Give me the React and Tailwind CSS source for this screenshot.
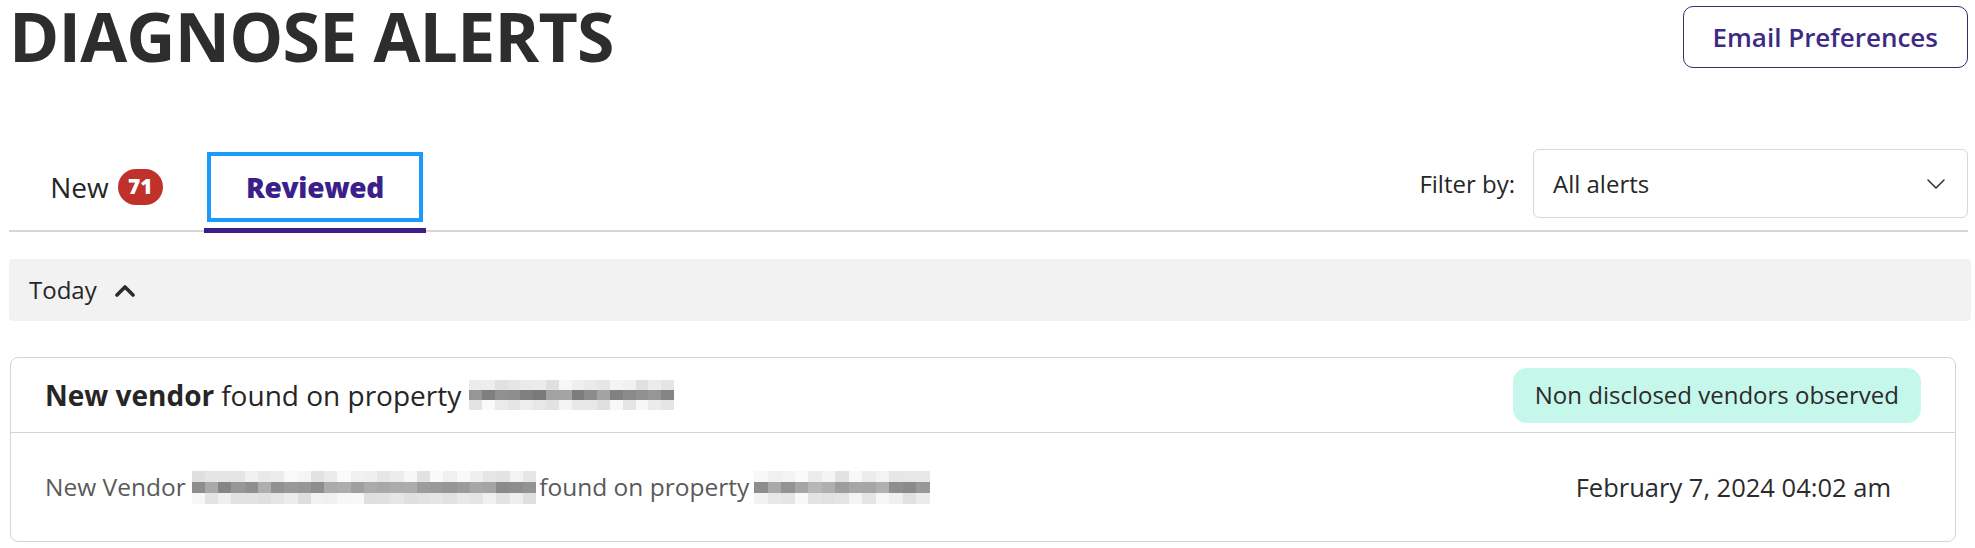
import React from "react";

// pixelated placeholder used where the screenshot hides property / vendor names
function Mosaic({ cols, rows, cell = 13, rowH = 10, seed = 1, dark = 1 }) {
  let s = seed;
  const rand = () => {
    s = (s * 9301 + 49297) % 233280;
    return s / 233280;
  };
  const cells = [];
  for (let r = 0; r < rows; r++) {
    for (let c = 0; c < cols; c++) {
      const mid = r === Math.floor(rows / 2);
      const base = mid ? 150 - 30 * dark : 222;
      const spread = mid ? 45 : 28;
      const v = Math.round(base + rand() * spread);
      cells.push(
        <div
          key={r + "-" + c}
          style={{ width: cell, height: rowH, backgroundColor: `rgb(${v},${v},${v})` }}
        />
      );
    }
  }
  return (
    <span className="inline-grid align-middle" style={{ gridTemplateColumns: `repeat(${cols}, ${cell}px)` }}>
      {cells}
    </span>
  );
}

export default function App() {
  return (
    <div className="min-h-screen bg-white font-['Open_Sans',sans-serif] text-[#2b2b2b]">
      {/* header */}
      <div className="ml-[9px] mr-[7px] flex items-start justify-between">
        <h1 className="text-[68px] font-bold leading-[72px] tracking-[-0.8px] text-[#2d2d2d]">DIAGNOSE ALERTS</h1>
        <button className="mt-[6px] flex h-[62px] items-center rounded-[10px] border-[1.5px] border-[#3b2a6e] px-[29px] text-[26px] font-semibold text-[#3d2a84]">
          Email Preferences
        </button>
      </div>

      {/* tabs + filter */}
      <div className="ml-[9px] mr-[7px] mt-[77px] flex items-start justify-between border-b-2 border-[#d6d6d6]">
        <div className="flex items-end">
          <div className="-mb-[3px] w-[195px] border-b-[5px] border-transparent pb-[6px] pt-[3px]">
            <div className="flex h-[70px] items-center justify-center border-4 border-transparent">
              <span className="text-[28px] text-[#262626]">New</span>
              <span className="ml-[9px] flex h-[36px] w-[45px] items-center justify-center rounded-full bg-[#c0312b] text-[21px] font-extrabold text-white">
                71
              </span>
            </div>
          </div>
          <div className="-mb-[3px] w-[222px] border-b-[5px] border-[#3b1f87] pb-[6px] pt-[3px]">
            <div className="mx-[3px] flex h-[70px] items-center justify-center border-4 border-[#1a9cff]">
              <span className="text-[28px] font-extrabold tracking-[-0.3px] text-[#3c1f8a]">Reviewed</span>
            </div>
          </div>
        </div>
        <div className="flex items-center gap-[18px]">
          <span className="text-[24px] text-[#262626]">Filter by:</span>
          <div className="flex h-[69px] w-[435px] items-center justify-between rounded-[6px] border border-[#d8d8d8] pl-[19px] pr-[21px]">
            <span className="text-[24px] text-[#262626]">All alerts</span>
            <svg width="20" height="12" viewBox="0 0 20 12" fill="none">
              <polyline points="2,2 10,10 18,2" stroke="#333" strokeWidth="1.6" strokeLinecap="round" strokeLinejoin="round" />
            </svg>
          </div>
        </div>
      </div>

      {/* group header */}
      <div className="ml-[9px] mr-[4px] mt-[27px] flex h-[62px] items-center gap-[17px] rounded-[4px] bg-[#f2f2f2] pl-[20px]">
        <span className="text-[24px] text-[#262626]">Today</span>
        <svg width="22" height="13" viewBox="0 0 22 13" fill="none">
          <polyline points="3,11 11,3 19,11" stroke="#2b2b2b" strokeWidth="3.6" strokeLinecap="round" strokeLinejoin="round" />
        </svg>
      </div>

      {/* alert card */}
      <div className="ml-[10px] mr-[19px] mt-[36px] rounded-[8px] border border-[#d4d4d4]">
        <div className="flex h-[75px] items-center justify-between border-b border-[#d4d4d4] pl-[34px] pr-[34px]">
          <div className="flex items-center text-[28px] text-[#262626]">
            <span className="font-bold">New vendor</span>
            <span className="ml-[7px]">found on property</span>
            <span className="ml-[8px] flex">
              <Mosaic cols={16} rows={3} cell={12.8} rowH={10} seed={7} />
            </span>
          </div>
          <span className="flex h-[55px] items-center rounded-[14px] bg-[#c6f7eb] px-[22px] text-[24px] text-[#2b2b2b]">
            Non disclosed vendors observed
          </span>
        </div>
        <div className="flex h-[108px] items-center justify-between pl-[34px] pr-[64px]">
          <div className="flex items-center text-[24.5px] text-[#5a5a5a]">
            <span>New Vendor</span>
            <span className="ml-[6px] flex">
              <Mosaic cols={26} rows={3} cell={13.25} rowH={11} seed={21} dark={0.6} />
            </span>
            <span className="ml-[3px]">found on property</span>
            <span className="ml-[5px] flex">
              <Mosaic cols={13} rows={3} cell={13.5} rowH={11} seed={43} dark={0.4} />
            </span>
          </div>
          <span className="text-[25.5px] text-[#2b2b2b]">February 7, 2024 04:02 am</span>
        </div>
      </div>
    </div>
  );
}
